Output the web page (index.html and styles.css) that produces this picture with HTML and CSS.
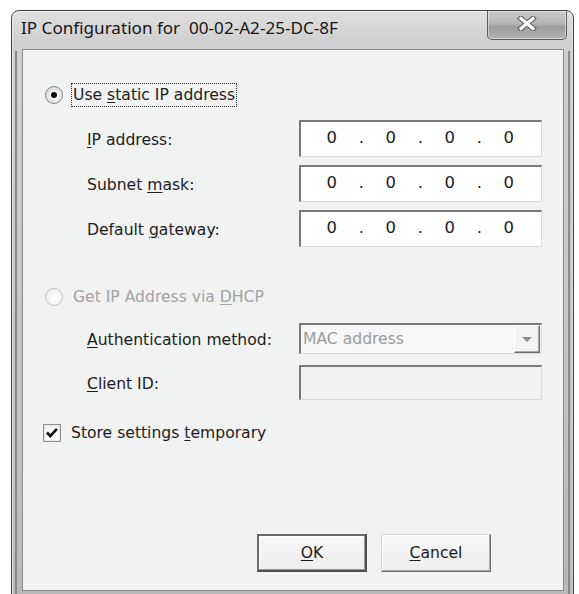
FILE: index.html
```html
<!DOCTYPE html>
<html lang="en">
<head>
<meta charset="utf-8">
<title>IP Configuration</title>
<link rel="stylesheet" href="styles.css">
</head>
<body>
<div class="window">
  <div class="titlebar">
    <span class="title">IP Configuration for  00-02-A2-25-DC-8F</span>
    <button class="close" type="button" aria-label="Close">
      <svg width="20" height="15" viewBox="0 0 20 15">
        <path d="M4 2.5 L16 12.5 M16 2.5 L4 12.5" stroke="#5b5b5b" stroke-width="5.4" stroke-linecap="square" fill="none"/>
        <path d="M4 2.5 L16 12.5 M16 2.5 L4 12.5" stroke="#ffffff" stroke-width="3.2" stroke-linecap="square" fill="none"/>
      </svg>
    </button>
  </div>

  <div class="client">
    <div class="option option-static">
      <span class="radio checked"></span>
      <span class="option-label focus">Use <u>s</u>tatic IP address</span>
    </div>

    <div class="fields static-fields">
      <span class="label"><u>I</u>P address:</span>
      <div class="ip"><span>0</span><span>.</span><span>0</span><span>.</span><span>0</span><span>.</span><span>0</span></div>
      <span class="label">Subnet <u>m</u>ask:</span>
      <div class="ip"><span>0</span><span>.</span><span>0</span><span>.</span><span>0</span><span>.</span><span>0</span></div>
      <span class="label">Default <u>g</u>ateway:</span>
      <div class="ip"><span>0</span><span>.</span><span>0</span><span>.</span><span>0</span><span>.</span><span>0</span></div>
    </div>

    <div class="option option-dhcp disabled">
      <span class="radio"></span>
      <span class="option-label">Get IP Address via <u>D</u>HCP</span>
    </div>

    <div class="fields dhcp-fields">
      <span class="label"><u>A</u>uthentication method:</span>
      <div class="combo">
        <span class="combo-text">MAC address</span>
        <span class="combo-btn"><span class="arrow"></span></span>
      </div>
      <span class="label"><u>C</u>lient ID:</span>
      <div class="edit"></div>
    </div>

    <div class="check-row">
      <span class="checkbox">
        <svg width="16" height="16" viewBox="0 0 16 16">
          <path d="M3 7.5 L6.3 11 L13 3.8" stroke="#111" stroke-width="2.6" fill="none"/>
        </svg>
      </span>
      <span class="check-label">Store settings <u>t</u>emporary</span>
    </div>

    <div class="buttons">
      <button class="btn btn-default" type="button"><u>O</u>K</button>
      <button class="btn" type="button"><u>C</u>ancel</button>
    </div>
  </div>
</div>
</body>
</html>
```

FILE: styles.css
```css
html, body {
  margin: 0;
  padding: 0;
  background: #ffffff;
  overflow: hidden;
}

body {
  width: 579px;
  height: 594px;
  font-family: "DejaVu Sans", "Liberation Sans", sans-serif;
  font-size: 15.6px;
  color: #1c1c1c;
}

u {
  text-decoration: underline;
  text-underline-offset: 2px;
  text-decoration-thickness: 1px;
}

/* window frame */
.window {
  box-sizing: border-box;
  width: 563px;
  margin: 10px 0 0 11px;
  border: 1px solid #3f3f3f;
  border-radius: 8px 8px 0 0;
  padding: 0 9px 12px 10px;
  background:
    linear-gradient(#8a8a8a, #8a8a8a) 3px 40px / 2px 100% no-repeat,
    linear-gradient(#8a8a8a, #8a8a8a) right 3px top 40px / 2px 100% no-repeat,
    linear-gradient(to bottom, #e0e0e0 0, #d0d0d0 30px, #c6c6c6 300px, #b8b8b8 600px);
  box-shadow: inset 1px 1px 0 rgba(255, 255, 255, 0.6), inset -1px 0 0 rgba(255, 255, 255, 0.4);
}

.titlebar {
  height: 38px;
  display: flex;
  align-items: flex-start;
}

.title {
  margin: 6px 0 0 -1px;
  font-family: "Noto Sans", "Open Sans", sans-serif;
  font-size: 17.1px;
  line-height: 22px;
  color: #151515;
  white-space: pre;
}

.close {
  margin: 0 -3px 0 auto;
  width: 80px;
  height: 29px;
  padding: 0;
  display: grid;
  place-items: center;
  border: 1px solid #5c5c5c;
  border-top: none;
  border-radius: 0 0 5px 5px;
  background: linear-gradient(to bottom, #cacaca 0, #b6b6b6 45%, #9d9d9d 55%, #b2b2b2 100%);
  box-shadow: inset 0 0 0 1px rgba(255, 255, 255, 0.45);
}

.close svg {
  display: block;
  margin-top: -3px;
}

/* client area */
.client {
  box-sizing: border-box;
  height: 542px;
  border: 1px solid #8a8a8a;
  background: #f1f2f2;
  padding-top: 33px;
}

.option {
  height: 24px;
  display: flex;
  align-items: center;
  padding-left: 22px;
}

.option-dhcp {
  margin-top: 38px;
}

.radio {
  box-sizing: border-box;
  width: 18px;
  height: 18px;
  border-radius: 50%;
  border: 1px solid #8b8b8b;
  background: radial-gradient(circle at 55% 55%, #ffffff 0, #f6f6f6 35%, #d6d6d6 75%, #c2c2c2 100%);
  display: grid;
  place-items: center;
  flex: none;
}

.radio.checked::after {
  content: "";
  width: 6px;
  height: 6px;
  border-radius: 50%;
  background: #111;
}

.option-label {
  margin-left: 8px;
  line-height: 22px;
  padding: 0 1px;
  border: 1px solid transparent;
}

.option-label.focus {
  border: 1px dotted #2a2a2a;
}

.disabled .radio {
  border-color: #c4c4c4;
  background: radial-gradient(circle at 55% 55%, #ffffff 0, #f8f8f8 40%, #e6e6e6 100%);
}

.disabled .option-label {
  color: #a3a3a3;
}

/* label / input grid */
.fields {
  display: grid;
  grid-template-columns: 212px 243px;
  padding-left: 64px;
  align-items: center;
}

.static-fields {
  margin-top: 13px;
  grid-auto-rows: 37px;
  row-gap: 8px;
}

.dhcp-fields {
  margin-top: 14px;
  grid-template-rows: 31px 35px;
  row-gap: 11px;
}

.label {
  line-height: 18px;
  padding-top: 2px;
}

.ip,
.combo,
.edit {
  box-sizing: border-box;
  height: 100%;
  border-style: solid;
  border-width: 2px 1px 1px 2px;
  border-color: #7a7a7a #dadada #dadada #7a7a7a;
}

.ip {
  background: #ffffff;
  display: grid;
  grid-template-columns: repeat(7, 29.5px);
  padding: 0 0 4px 16px;
  align-items: center;
  text-align: center;
  font-size: 16.4px;
  color: #222;
}

.combo {
  background: #f7f7f7;
  display: flex;
  align-items: center;
  padding: 0 1px 0 2px;
  color: #9c9c9c;
}

.combo-btn {
  box-sizing: border-box;
  margin-left: auto;
  width: 26px;
  height: 28px;
  display: grid;
  place-items: center;
  background: #f3f3f3;
  border: 1px solid;
  border-color: #ffffff #6c6c6c #6c6c6c #ffffff;
  box-shadow: inset -1px -1px 0 #a9a9a9;
}

.arrow {
  width: 0;
  height: 0;
  border-left: 5px solid transparent;
  border-right: 5px solid transparent;
  border-top: 5px solid #8c8c8c;
}

.edit {
  background: #f1f2f2;
}

/* checkbox */
.check-row {
  margin-top: 24px;
  height: 18px;
  display: flex;
  align-items: center;
  padding-left: 20px;
}

.checkbox {
  box-sizing: border-box;
  width: 18px;
  height: 18px;
  border: 1px solid #8e8e8e;
  background: linear-gradient(135deg, #f2f2f2, #ffffff);
  box-shadow: inset 0 0 0 1px #e4e4e4;
  display: grid;
  place-items: center;
  flex: none;
}

.checkbox svg {
  display: block;
}

.check-label {
  margin-left: 10px;
  line-height: 18px;
}

/* dialog buttons */
.buttons {
  margin-top: 92px;
  display: flex;
  gap: 14px;
  padding-left: 234px;
}

.btn {
  box-sizing: border-box;
  width: 110px;
  height: 38px;
  padding: 0;
  font-family: "DejaVu Sans", "Liberation Sans", sans-serif;
  font-size: 15.6px;
  color: #1a1a1a;
  background: linear-gradient(to bottom, #f7f7f7, #ededed);
  border: 1px solid;
  border-color: #d6d6d6 #6f6f6f #6f6f6f #d6d6d6;
  box-shadow: inset -1px -1px 0 #a8a8a8, inset 1px 1px 0 #ffffff;
}

.btn-default {
  border: 2px solid;
  border-color: #6a6a6a #4f4f4f #4f4f4f #6a6a6a;
  box-shadow: inset -1px -1px 0 #9a9a9a, inset 1px 1px 0 #ffffff;
}
```
